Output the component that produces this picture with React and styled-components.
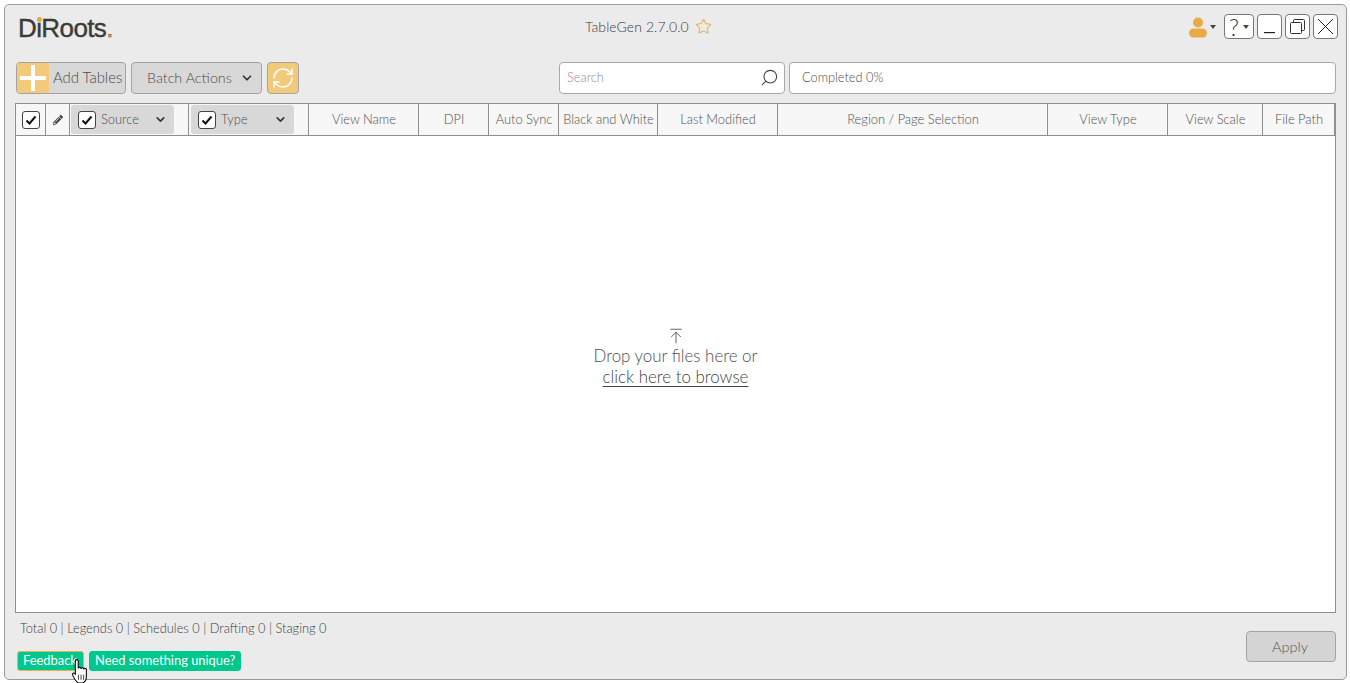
import React from "react";
import styled, { createGlobalStyle } from "styled-components";
import { ChevronDown, RefreshCw, Search, Star, ArrowUpToLine } from "lucide-react";
import { FaPencilAlt } from "react-icons/fa";

const Global = createGlobalStyle`
  html, body { margin: 0; padding: 0; background: #fff; overflow: hidden; }
  * { box-sizing: border-box; }
  body { font-family: "Lato", "Open Sans", sans-serif; color: #555; }
`;

const Page = styled.div`
  position: relative;
  width: 1350px;
  height: 683px;
  padding: 4px 3px 3px 4px;
`;

const Window = styled.div`
  height: 676px;
  display: flex;
  flex-direction: column;
  padding: 0 10px;
  background: #ebebeb;
  border: 1px solid #9a9a9a;
  border-radius: 5px;
`;

const TitleBar = styled.div`
  height: 57px;
  display: flex;
  align-items: flex-start;
`;

const LogoCell = styled.div`
  width: 570px;
  padding: 6px 0 0 3px;
`;

const Logo = styled.div`
  position: relative;
  display: inline-block;
  font-family: "Liberation Sans", sans-serif;
  font-size: 26px;
  line-height: 34px;
  letter-spacing: -0.6px;
  color: #3b3a36;
  -webkit-text-stroke: 0.4px #3b3a36;
  span { color: #eaa93c; }
  &::after {
    content: "";
    position: absolute;
    left: 19px;
    top: 6px;
    width: 5px;
    height: 5px;
    border-radius: 50%;
    background: #eaa93c;
  }
`;

const Title = styled.div`
  display: flex;
  align-items: center;
  gap: 6px;
  height: 20px;
  margin-top: 11px;
  font-size: 14px;
  font-weight: 300;
  color: #3c3c3c;
  letter-spacing: 0.07px;
`;

const Controls = styled.div`
  margin-left: auto;
  margin-right: -2px;
  margin-top: 9px;
  display: flex;
  align-items: center;
  gap: 3px;
`;

const UserMenu = styled.div`
  width: 36px;
  height: 25px;
  padding-left: 3px;
  display: flex;
  align-items: center;
  gap: 2px;
`;

const Caret = styled.i`
  display: block;
  border-left: 3.5px solid transparent;
  border-right: 3.5px solid transparent;
  border-top: 4px solid #444;
`;

const WinButton = styled.button`
  width: ${p => p.$w || 25}px;
  height: 25px;
  padding: 0;
  display: flex;
  align-items: center;
  justify-content: center;
  gap: 4px;
  font: 300 23px "Lato", sans-serif;
  color: #333;
  background: #fff;
  border: 1px solid #777;
  border-radius: 4px;
`;

const Toolbar = styled.div`
  height: 32px;
  display: flex;
  align-items: stretch;
  padding-left: 1px;
`;

const AddButton = styled.div`
  width: 110px;
  display: flex;
  align-items: center;
  overflow: hidden;
  background: #d8d8d8;
  border: 1px solid #a3a3a3;
  border-radius: 4px;
  font-size: 14.9px;
  font-weight: 300;
  color: #4a4a4a;
  white-space: nowrap;
  span { margin-top: -3px; }
`;

const PlusBox = styled.div`
  width: 32px;
  height: 100%;
  margin-right: 4px;
  flex: none;
  display: flex;
  align-items: center;
  justify-content: center;
  background: #f3ca7a;
`;

const BatchButton = styled.div`
  width: 131px;
  margin-left: 5px;
  padding: 0 7px 1px 15px;
  display: flex;
  align-items: center;
  justify-content: space-between;
  background: #d8d8d8;
  border: 1px solid #a3a3a3;
  border-radius: 4px;
  font-size: 14.3px;
  font-weight: 300;
  color: #4a4a4a;
`;

const RefreshButton = styled.div`
  width: 32px;
  margin-left: 5px;
  display: flex;
  align-items: center;
  justify-content: center;
  background: #f3ca7a;
  border: 1px solid #a3a3a3;
  border-radius: 4px;
  color: #fff;
`;

const SearchBox = styled.div`
  width: 226px;
  margin-left: 260px;
  padding: 0 5px 2px 7px;
  display: flex;
  align-items: center;
  justify-content: space-between;
  background: #fff;
  border: 1px solid #a8a8a8;
  border-radius: 4px;
  font-size: 12.8px;
  font-weight: 300;
  color: #8f8f8f;
  svg { transform: scaleX(-1); color: #444; }
`;

const Progress = styled.div`
  flex: 1;
  margin-left: 4px;
  padding: 0 0 2px 12px;
  display: flex;
  align-items: center;
  background: #fff;
  border: 1px solid #a8a8a8;
  border-radius: 4px;
  font-size: 12.8px;
  font-weight: 300;
  color: #4a4a4a;
`;

const Table = styled.div`
  height: 510px;
  margin-top: 9px;
  display: flex;
  flex-direction: column;
  background: #fff;
  border: 1px solid #8f8f8f;
`;

const HeaderRow = styled.div`
  height: 32px;
  flex: none;
  display: grid;
  grid-template-columns: 30px 24px 119px 120px 110px 70px 70px 99px 120px 270px 120px 95px 72px;
  background: #f7f7f7;
  border-bottom: 1px solid #8f8f8f;
`;

const HeadCell = styled.div`
  display: flex;
  align-items: center;
  justify-content: ${p => (p.$pad ? "flex-start" : "center")};
  padding-left: ${p => p.$pad || 0}px;
  border-right: 1px solid #8f8f8f;
  font-size: 12.9px;
  font-weight: 300;
  color: #4f4f4f;
  white-space: nowrap;
`;

const HeadLabel = styled.span`
  margin: -2px 0 0 1px;
`;

const Filter = styled.div`
  width: 103px;
  height: 29px;
  display: flex;
  align-items: center;
  padding: 0 7px 0 7px;
  background: #d8d8d8;
  border-radius: 3px;
`;

const FilterLabel = styled.span`
  flex: 1;
  margin: -2px 0 0 5px;
`;

const CheckBox = styled.div`
  width: 18px;
  height: 18px;
  display: flex;
  align-items: center;
  justify-content: center;
  flex: none;
  background: #fff;
  border: 1px solid #444;
  border-radius: 3px;
`;

const DropZone = styled.div`
  flex: 1;
  display: flex;
  flex-direction: column;
  align-items: center;
  padding-top: 191px;
  font-size: 16.9px;
  font-weight: 300;
  line-height: 21px;
  color: #4f4f4f;
  svg { display: block; color: #333; }
  a { color: #444; text-decoration: underline; text-underline-offset: 3px; }
`;

const Footer = styled.div`
  flex: 1;
  display: flex;
  justify-content: space-between;
  padding: 8px 0 0 5px;
`;

const Stats = styled.div`
  font-size: 12.8px;
  font-weight: 300;
  line-height: 14px;
  color: #404040;
`;

const Tags = styled.div`
  display: flex;
  gap: 5px;
  margin: 16px 0 0 -3px;
`;

const Tag = styled.div`
  height: 20px;
  width: ${p => p.$w}px;
  display: flex;
  align-items: center;
  padding: 0 0 2px 5px;
  background: #00c78b;
  border: 1px solid ${p => (p.$active ? "#eeb04a" : "#00c78b")};
  border-radius: 3px;
  font-size: 12.9px;
  color: #fff;
  white-space: nowrap;
  overflow: hidden;
`;

const ApplyButton = styled.div`
  width: 90px;
  height: 31px;
  margin-top: 10px;
  padding-right: 2px;
  display: flex;
  align-items: center;
  justify-content: center;
  background: #d4d4d4;
  border: 1px solid #a3a3a3;
  border-radius: 4px;
  font-size: 14.5px;
  font-weight: 300;
  color: #555;
`;

const Cursor = styled.svg`
  position: absolute;
  left: 71px;
  top: 659px;
`;

const Check = () => (
  <svg width="12" height="12" viewBox="0 0 12 12" fill="none">
    <path d="M1.5 6.5 L4.5 9.5 L10.5 2.5" stroke="#111" strokeWidth="2" />
  </svg>
);

const headings = [
  "View Name",
  "DPI",
  "Auto Sync",
  "Black and White",
  "Last Modified",
  "Region / Page Selection",
  "View Type",
  "View Scale",
  "File Path",
];

export default function App() {
  return (
    <Page>
      <Global />
      <Window>
        <TitleBar>
          <LogoCell>
            <Logo>DiRoots<span>.</span></Logo>
          </LogoCell>
          <Title>
            TableGen 2.7.0.0
            <Star size={17} color="#eab04d" strokeWidth={1.5} />
          </Title>
          <Controls>
            <UserMenu>
              <svg width="20" height="22" viewBox="0 0 20 22" fill="#e8ab47">
                <circle cx="10" cy="6.5" r="5" />
                <rect x="1" y="12.5" width="18" height="9" rx="4.5" />
              </svg>
              <Caret />
            </UserMenu>
            <WinButton $w={30}>? <Caret /></WinButton>
            <WinButton>
              <svg width="13" height="16" viewBox="0 0 13 16"><rect x="1" y="13" width="11" height="1.2" fill="#222" /></svg>
            </WinButton>
            <WinButton>
              <svg width="17" height="17" viewBox="0 0 17 17" fill="none" stroke="#333">
                <rect x="1.5" y="4.5" width="11" height="11" rx="1" />
                <path d="M4.5 4.5 V2.5 a1 1 0 0 1 1-1 H14.5 a1 1 0 0 1 1 1 V11.5 a1 1 0 0 1-1 1 H12.5" />
              </svg>
            </WinButton>
            <WinButton>
              <svg width="19" height="19" viewBox="0 0 19 19" stroke="#222"><path d="M2 2 L17 17 M17 2 L2 17" /></svg>
            </WinButton>
          </Controls>
        </TitleBar>

        <Toolbar>
          <AddButton>
            <PlusBox>
              <svg width="26" height="26" viewBox="0 0 26 26" fill="#fff">
                <rect x="0" y="11" width="26" height="4" />
                <rect x="11" y="0" width="4" height="26" />
              </svg>
            </PlusBox>
            <span>Add Tables</span>
          </AddButton>
          <BatchButton>
            Batch Actions
            <ChevronDown size={14} strokeWidth={3} color="#333" />
          </BatchButton>
          <RefreshButton>
            <RefreshCw size={24} strokeWidth={1.5} />
          </RefreshButton>
          <SearchBox>
            Search
            <Search size={19} strokeWidth={1.4} />
          </SearchBox>
          <Progress>Completed 0%</Progress>
        </Toolbar>

        <Table>
          <HeaderRow>
            <HeadCell><CheckBox><Check /></CheckBox></HeadCell>
            <HeadCell><FaPencilAlt size={10} color="#444" /></HeadCell>
            <HeadCell $pad={1}>
              <Filter>
                <CheckBox><Check /></CheckBox>
                <FilterLabel>Source</FilterLabel>
                <ChevronDown size={13} strokeWidth={3} color="#333" />
              </Filter>
            </HeadCell>
            <HeadCell $pad={2}>
              <Filter>
                <CheckBox><Check /></CheckBox>
                <FilterLabel>Type</FilterLabel>
                <ChevronDown size={13} strokeWidth={3} color="#333" />
              </Filter>
            </HeadCell>
            {headings.map(h => <HeadCell key={h}><HeadLabel>{h}</HeadLabel></HeadCell>)}
          </HeaderRow>
          <DropZone>
            <ArrowUpToLine size={18} strokeWidth={1} />
            <div>Drop your files here or</div>
            <a>click here to browse</a>
          </DropZone>
        </Table>

        <Footer>
          <div>
            <Stats>Total 0 | Legends 0 | Schedules 0 | Drafting 0 | Staging 0</Stats>
            <Tags>
              <Tag $w={67} $active>Feedback</Tag>
              <Tag $w={152}>Need something unique?</Tag>
            </Tags>
          </div>
          <ApplyButton>Apply</ApplyButton>
        </Footer>
      </Window>
      <Cursor width="18" height="25" viewBox="0 0 17 24">
        <path
          d="M4 2 a1.4 1.4 0 0 1 2.8 0 V9 a1.3 1.3 0 0 1 2.6 .5 a1.3 1.3 0 0 1 2.6 .5 a1.3 1.3 0 0 1 2.6 .7 V17 c0 3-1.5 5-3.5 6 H7 C5 22 3 19 1.5 15.5 C.8 13.5 2.5 12.8 4 14.5 Z"
          fill="#fff"
          stroke="#000"
          strokeWidth="1"
        />
        <path d="M7 15 V20 M9.5 15 V20 M12 15 V20" stroke="#000" strokeWidth=".7" />
      </Cursor>
    </Page>
  );
}
